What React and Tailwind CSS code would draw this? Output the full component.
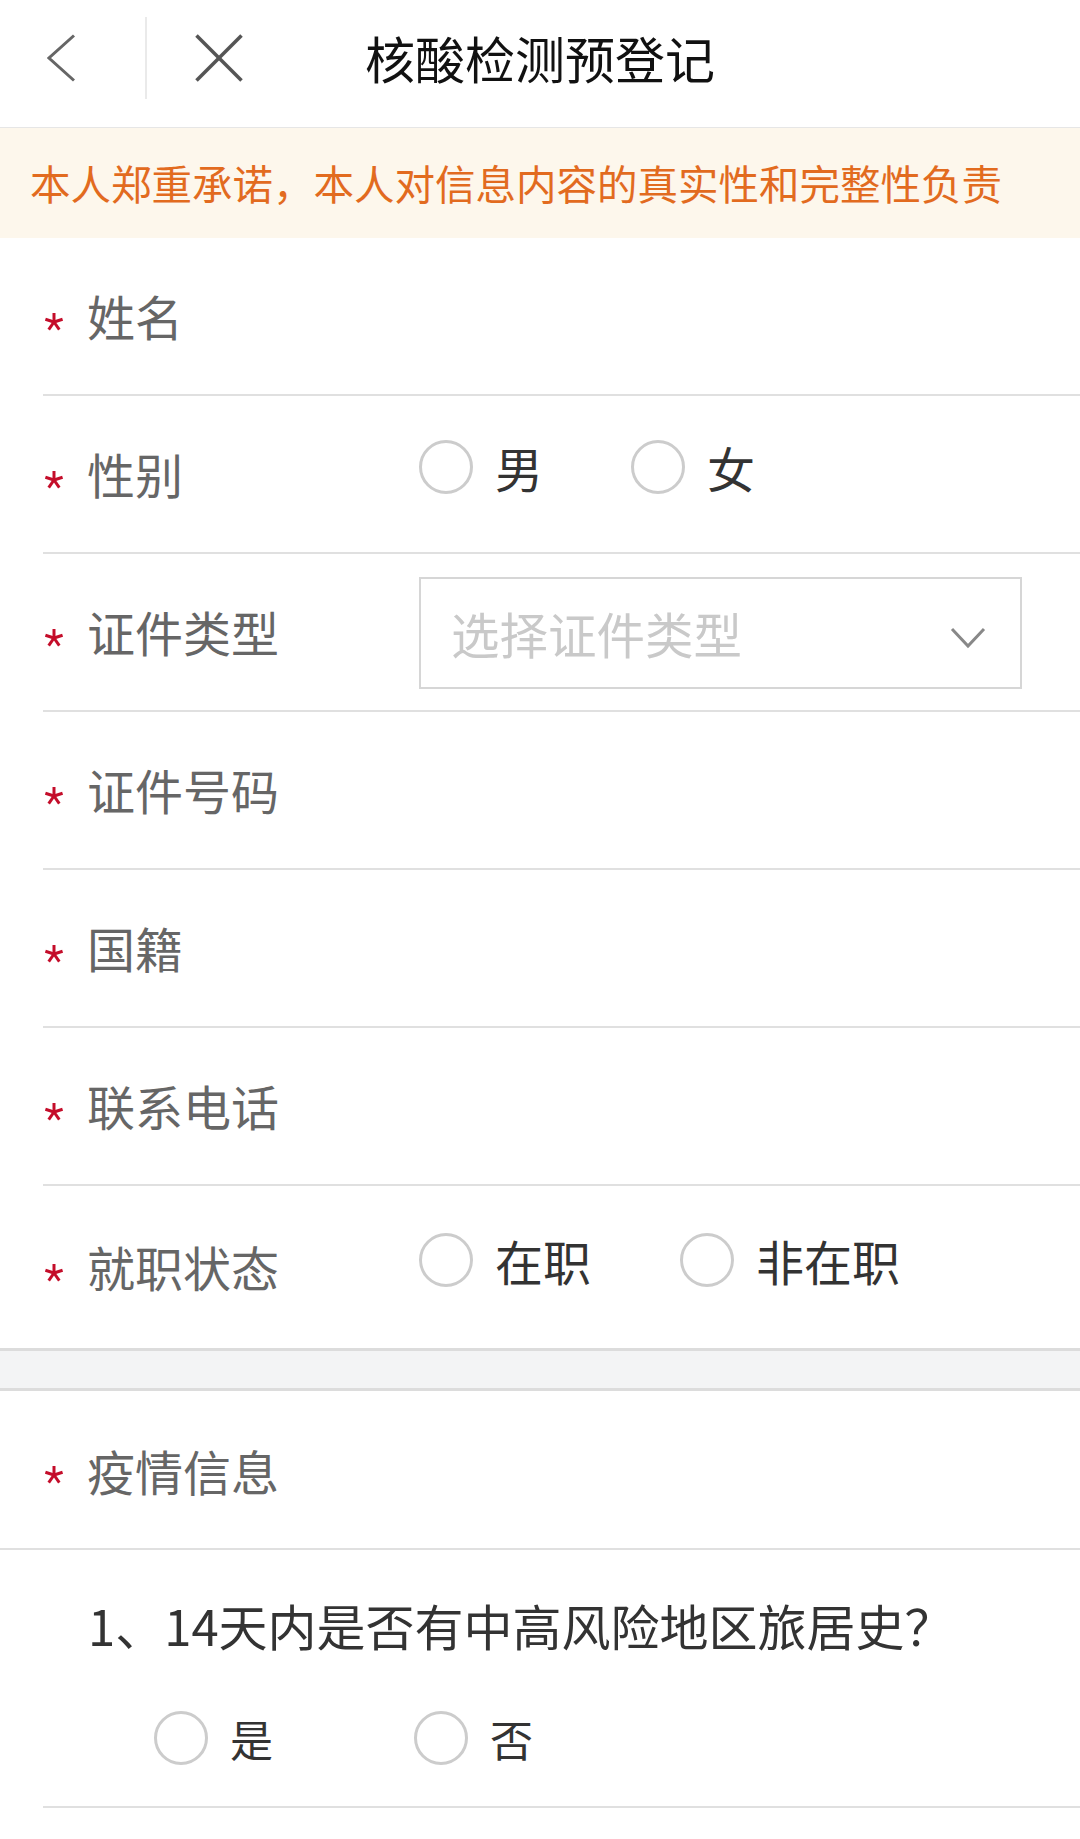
import React from "react";

function Asterisk() {
  return (
    <div className="w-[44px] pl-[2px] flex items-center translate-y-[5px] shrink-0">
      <svg width="18" height="19" viewBox="0 0 18 19" fill="none" stroke="#c40d2a" strokeWidth="3" strokeLinecap="butt">
        <line x1="9" y1="10" x2="9" y2="1" />
        <line x1="9" y1="10" x2="17.6" y2="7.2" />
        <line x1="9" y1="10" x2="14.3" y2="17.6" />
        <line x1="9" y1="10" x2="3.7" y2="17.6" />
        <line x1="9" y1="10" x2="0.4" y2="7.2" />
      </svg>
    </div>
  );
}

function Radio({ label, width, size = "text-[48px]" }) {
  return (
    <div className="flex items-center shrink-0" style={{ width }}>
      <div className="w-[54px] h-[54px] rounded-full border-[3px] border-[#cccccc] bg-white shrink-0" />
      <span className={`ml-[22px] ${size} leading-none text-[#333333]`}>{label}</span>
    </div>
  );
}

function Label({ text }) {
  return <span className="text-[48px] leading-none text-[#666666]">{text}</span>;
}

function Row({ label, children, last = false }) {
  return (
    <div
      className={
        last
          ? "ml-[43px] h-[162px] flex items-center"
          : "ml-[43px] h-[156px] box-content border-b-2 border-[#e0e0e0] flex items-center"
      }
    >
      <Asterisk />
      <div className="w-[332px] shrink-0">
        <Label text={label} />
      </div>
      {children}
    </div>
  );
}

export default function App() {
  return (
    <div className="w-[1080px] min-h-[1839px] bg-white font-['Noto_Sans_CJK_SC','Noto_Sans',sans-serif] overflow-hidden">
      {/* Header */}
      <div className="h-[127px] box-content border-b border-[#e6e6e6]">
        <div className="h-[116px] flex items-center">
          <div className="w-[260px] flex items-center shrink-0">
            <svg className="ml-[47px]" width="30" height="48" viewBox="0 0 30 48" fill="none" stroke="#666666" strokeWidth="3">
              <polyline points="27,1.5 2,24 27,46.5" />
            </svg>
            <div className="ml-[68px] w-[2px] h-[82px] bg-[#eaeaea]" />
            <svg className="ml-[48px]" width="48" height="48" viewBox="0 0 48 48" fill="none" stroke="#555555" strokeWidth="3.5">
              <line x1="1.5" y1="1.5" x2="46.5" y2="46.5" />
              <line x1="46.5" y1="1.5" x2="1.5" y2="46.5" />
            </svg>
          </div>
          <div className="flex-1 text-center text-[50px] leading-none text-[#111111] -mt-[3px]">核酸检测预登记</div>
          <div className="w-[260px] shrink-0" />
        </div>
      </div>

      {/* Notice */}
      <div className="h-[110px] bg-[#fdf7ec] flex items-center pl-[30px]">
        <span className="text-[40.5px] leading-none text-[#e26b1f]">本人郑重承诺，本人对信息内容的真实性和完整性负责</span>
      </div>

      {/* Form */}
      <Row label="姓名" />
      <Row label="性别">
        <div className="flex items-center mb-[14px]">
          <Radio label="男" width="212px" />
          <Radio label="女" width="200px" />
        </div>
      </Row>
      <Row label="证件类型">
        <div className="w-[603px] h-[112px] border-2 border-[#d6d6d6] flex items-center justify-between pl-[30px] pr-[34px] mt-[2px]">
          <span className="text-[48.5px] leading-none text-[#c9c9c9]">选择证件类型</span>
          <svg className="mt-[10px]" width="36" height="22" viewBox="0 0 36 22" fill="none" stroke="#888888" strokeWidth="3">
            <polyline points="2,2 18,19 34,2" />
          </svg>
        </div>
      </Row>
      <Row label="证件号码" />
      <Row label="国籍" />
      <Row label="联系电话" />
      <Row label="就职状态" last>
        <div className="flex items-center mb-[14px]">
          <Radio label="在职" width="261px" />
          <Radio label="非在职" width="260px" />
        </div>
      </Row>

      {/* Section gap */}
      <div className="h-[37px] box-content border-t-[3px] border-b-[3px] border-[#dcdcdc] bg-[#f3f4f5]" />

      {/* Epidemic info */}
      <div className="h-[157px] box-content border-b-2 border-[#e0e0e0] pl-[43px] flex items-center">
        <Asterisk />
        <Label text="疫情信息" />
      </div>

      {/* Question */}
      <div className="ml-[43px] box-content border-b-2 border-[#e0e0e0] pt-[50px] pb-[41px]">
        <div className="pl-[45px] text-[49px] leading-none text-[#333333]">1、14天内是否有中高风险地区旅居史？</div>
        <div className="flex items-center pl-[111px] mt-[62px]">
          <Radio label="是" width="260px" size="text-[43px]" />
          <Radio label="否" width="200px" size="text-[43px]" />
        </div>
      </div>
    </div>
  );
}
